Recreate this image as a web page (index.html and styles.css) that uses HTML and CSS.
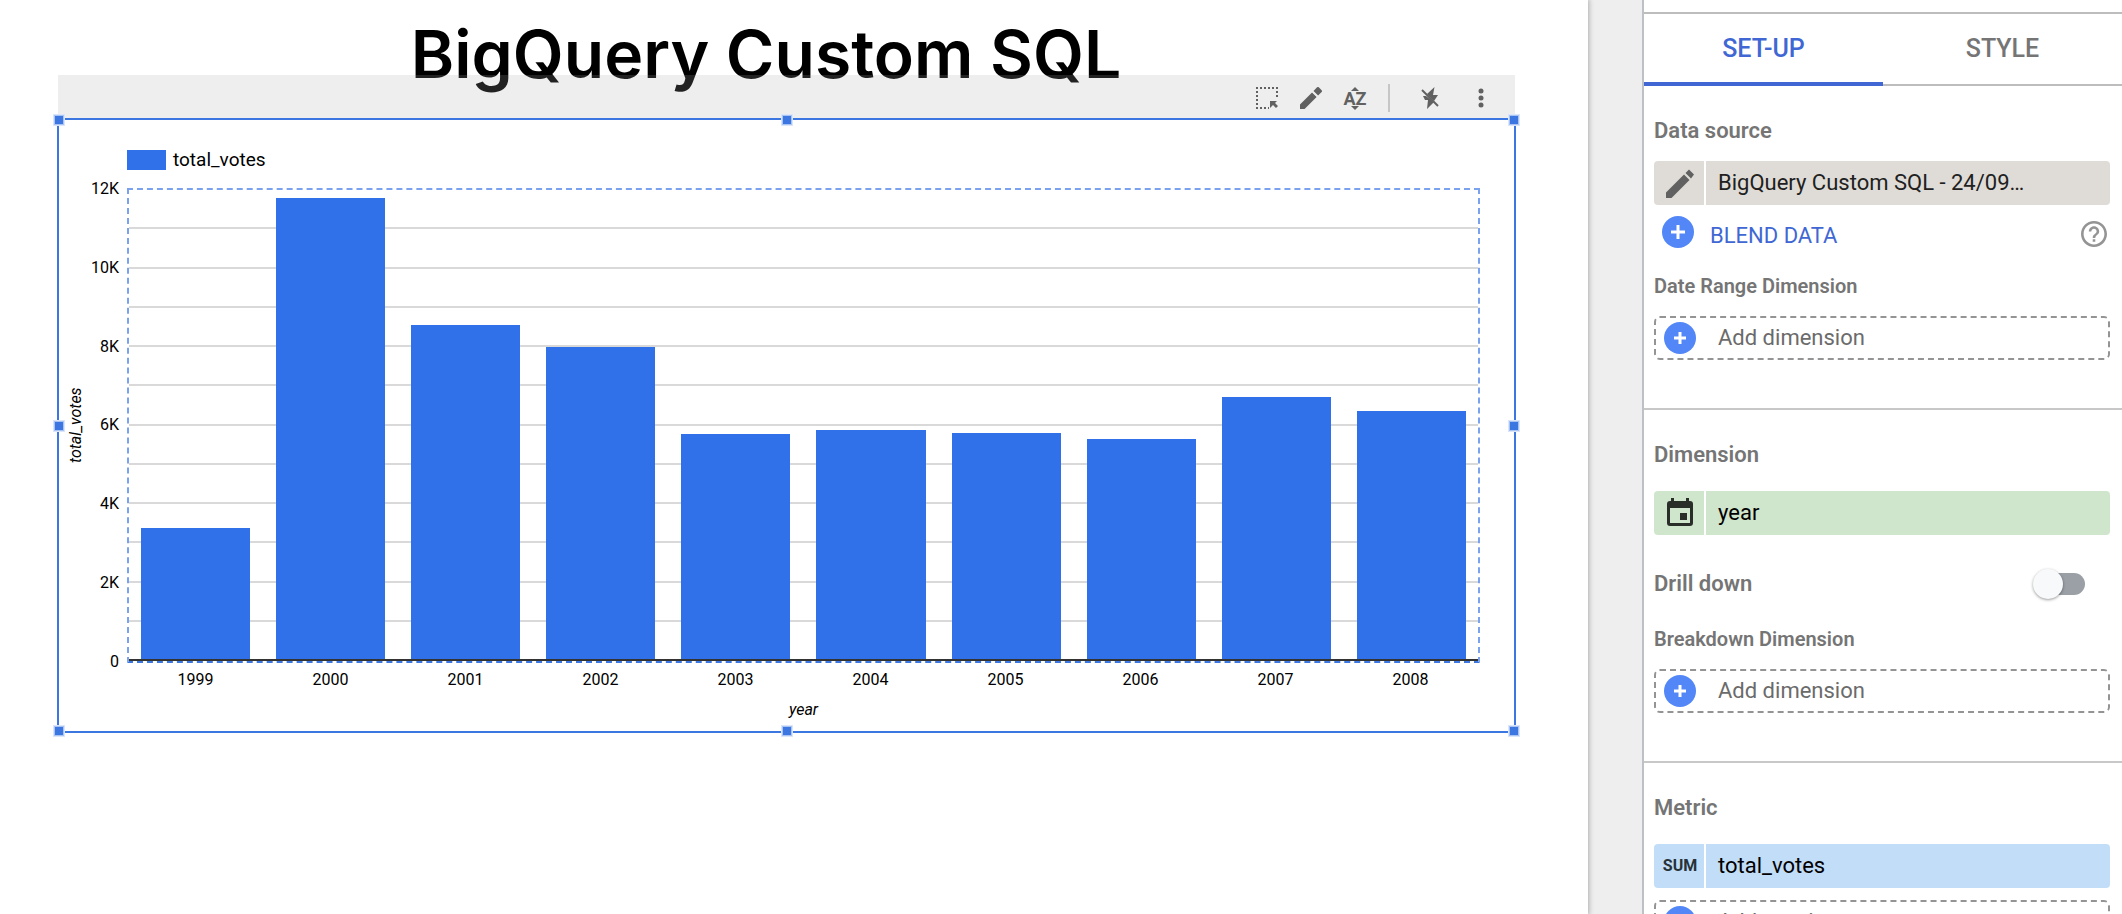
FILE: index.html
```html
<!DOCTYPE html>
<html lang="en">
<head>
<meta charset="utf-8">
<title>BigQuery Custom SQL</title>
<link rel="stylesheet" href="styles.css">
</head>
<body>
<svg class="defs" aria-hidden="true">
  <symbol id="pencil" viewBox="3 3 18 18"><path d="M3 17.25V21h3.75L16.600 11.150l-3.750-3.750L3 17.250zM20.710 7.040a1 1 0 0 0 0-1.410l-2.340-2.340a1 1 0 0 0-1.410 0l-2.900 2.900 3.750 3.750 2.900-2.900z"/><path d="m13.200 6.800 4 4" stroke="#eee" stroke-width=".8"/></symbol>
  <symbol id="pencil-split" viewBox="0 0 28 29"><path d="M0 23.500 18 5.500l5.500 5.500-18 18H0zM19.500 4 23 .5 28 5.500 25 9.500z"/></symbol>
  <symbol id="plus" viewBox="0 0 32 32"><circle cx="16" cy="16" r="16"/><path d="M16 10v12M10 16h12" stroke="#fff" stroke-width="3"/></symbol>
  <symbol id="plus-large" viewBox="0 0 32 32"><circle cx="16" cy="16" r="16"/><path d="M16 9v14M9 16h14" stroke="#fff" stroke-width="3"/></symbol>
</svg>
<div class="app">
  <main class="workspace">
    <div class="page">
      <h1 class="title">BigQuery Custom SQL</h1>
      <section class="component">
        <div class="toolbar">
          <button class="tool" aria-label="Select"><svg width="22" height="22" viewBox="0 0 22 22"><path d="M0 1h22M1 4v18M21 4v8M4 21h9" fill="none" stroke="#616161" stroke-width="2" stroke-dasharray="2 2"/><path d="M14 14h7l-2 2 3 3-2 2-3-3-3 3z"/></svg></button>
          <button class="tool" aria-label="Edit"><svg width="22" height="22"><use href="#pencil"/></svg></button>
          <button class="tool tool-sort" aria-label="Sort"><svg width="8" height="4" viewBox="0 0 8 4"><path d="M0 4 4 0l4 4z"/></svg><span>AZ</span><svg width="8" height="4" viewBox="0 0 8 4"><path d="M0 0h8L4 4z"/></svg></button>
          <span class="rule"></span>
          <button class="tool tool-flash" aria-label="Cross-filtering off"><svg width="18" height="24" viewBox="0 0 18 24"><path d="M13.500 1 12 9h5l-4 6-7-7zM2 10h3l8 6-7 7 1-9H4z"/><path d="M1 4 17 20" stroke="#616161" stroke-width="2"/></svg></button>
          <button class="tool" aria-label="More"><svg width="6" height="20" viewBox="0 0 6 20"><circle cx="3" cy="3" r="2.500"/><circle cx="3" cy="10" r="2.500"/><circle cx="3" cy="17" r="2.500"/></svg></button>
        </div>
        <div class="chart">
          <i class="handle h0 v0"></i><i class="handle h1 v0"></i><i class="handle h2 v0"></i>
          <i class="handle h0 v1"></i><i class="handle h2 v1"></i>
          <i class="handle h0 v2"></i><i class="handle h1 v2"></i><i class="handle h2 v2"></i>
          <div class="legend"><span class="swatch"></span>total_votes</div>
          <div class="graph">
            <div class="y-title">total_votes</div>
            <div class="y-axis"><span>12K</span><span>10K</span><span>8K</span><span>6K</span><span>4K</span><span>2K</span><span>0</span></div>
            <div class="plot">
              <div class="grid"><i></i><i></i><i></i><i></i><i></i><i></i><i></i><i></i><i></i><i></i><i></i><i></i></div>
              <div class="bars">
                <div class="bar" style="height:28%"></div>
                <div class="bar" style="height:98.200%"></div>
                <div class="bar" style="height:71.300%"></div>
                <div class="bar" style="height:66.600%"></div>
                <div class="bar" style="height:47.900%"></div>
                <div class="bar" style="height:48.800%"></div>
                <div class="bar" style="height:48.200%"></div>
                <div class="bar" style="height:47%"></div>
                <div class="bar" style="height:55.800%"></div>
                <div class="bar" style="height:52.900%"></div>
              </div>
            </div>
          </div>
          <div class="x-axis"><span>1999</span><span>2000</span><span>2001</span><span>2002</span><span>2003</span><span>2004</span><span>2005</span><span>2006</span><span>2007</span><span>2008</span></div>
          <div class="x-title">year</div>
        </div>
      </section>
    </div>
  </main>
  <aside class="panel">
    <div class="tabs" role="tablist">
      <button class="tab tab-on" role="tab" aria-selected="true">SET-UP</button>
      <button class="tab" role="tab" aria-selected="false">STYLE</button>
    </div>
    <section class="group group-first">
      <h2 class="heading">Data source</h2>
      <button class="chip chip-source"><span class="chip-icon"><svg width="28" height="29"><use href="#pencil-split"/></svg></span><span class="chip-text">BigQuery Custom SQL - 24/09…</span></button>
      <div class="blend">
        <button class="blend-button"><svg class="add" width="32" height="32"><use href="#plus-large"/></svg><span>BLEND DATA</span></button>
        <button class="help" aria-label="Help"><svg width="26" height="26" viewBox="2 2 20 20"><path d="M11 18h2v-2h-2v2zm1-16C6.480 2 2 6.480 2 12s4.480 10 10 10 10-4.480 10-10S17.520 2 12 2zm0 18c-4.410 0-8-3.590-8-8s3.590-8 8-8 8 3.590 8 8-3.590 8-8 8zm0-14c-2.210 0-4 1.790-4 4h2c0-1.100.9-2 2-2s2 .9 2 2c0 2-3 1.750-3 5h2c0-2.250 3-2.500 3-5 0-2.210-1.790-4-4-4z"/></svg></button>
      </div>
      <h3 class="subheading">Date Range Dimension</h3>
      <button class="slot"><svg class="add" width="32" height="32"><use href="#plus"/></svg><span>Add dimension</span></button>
    </section>
    <section class="group">
      <h2 class="heading">Dimension</h2>
      <button class="chip chip-dimension"><span class="chip-icon"><svg width="26" height="29" viewBox="0 0 26 29"><path fill-rule="evenodd" d="M4 0h3v3h12V0h3v3h1a3 3 0 0 1 3 3v19a3 3 0 0 1-3 3H3a3 3 0 0 1-3-3V6a3 3 0 0 1 3-3h1zM3 10v15h20V10zM13 15h7v7h-7z"/></svg></span><span class="chip-text">year</span></button>
      <label class="drill"><span class="heading-text">Drill down</span><input class="switch" type="checkbox" role="switch"></label>
      <h3 class="subheading">Breakdown Dimension</h3>
      <button class="slot"><svg class="add" width="32" height="32"><use href="#plus"/></svg><span>Add dimension</span></button>
    </section>
    <section class="group">
      <h2 class="heading">Metric</h2>
      <button class="chip chip-metric"><span class="chip-icon">SUM</span><span class="chip-text">total_votes</span></button>
      <button class="slot slot-next"><svg class="add" width="32" height="32"><use href="#plus"/></svg><span>Add metric</span></button>
    </section>
  </aside>
</div>
</body>
</html>
```
FILE: styles.css
```css
* { box-sizing: border-box; }
body {
  margin: 0;
  height: 100vh;
  overflow: hidden;
  font-family: Roboto, "Liberation Sans", sans-serif;
  color: #000;
  background: #eee;
}
button {
  margin: 0;
  padding: 0;
  border: 0;
  background: none;
  font: inherit;
  color: inherit;
  text-align: left;
}
h1, h2, h3 { margin: 0; }
svg { display: block; flex: none; }
.defs { position: absolute; width: 0; height: 0; }
.app { display: flex; height: 100%; }

.workspace { flex: 1; min-width: 0; padding-right: 54px; }
.page {
  height: 100%;
  padding-right: 72px;
  padding-left: 57px;
  background: #fff;
  box-shadow: 0 0 5px 1px rgba(0, 0, 0, .28);
}
.title {
  padding-top: 14px;
  padding-right: 41px;
  font: 600 66px/80px Inter, "Open Sans", sans-serif;
  text-align: center;
  white-space: nowrap;
}
.component { position: relative; margin-top: -19px; }
.toolbar {
  display: flex;
  align-items: center;
  justify-content: flex-end;
  height: 43px;
  margin: 0 1px;
  padding: 3px 30px 0 0;
  background: rgba(170, 170, 170, .2);
}
.tool { display: flex; justify-content: center; width: 44px; fill: #616161; }
.tool:last-child { width: 8px; }
.tool-sort {
  flex-direction: column;
  align-items: center;
  gap: 1px;
  color: #616161;
  font: bold 18px/13px Roboto, sans-serif;
}
.tool-flash { width: 48px; margin-right: 23px; }
.rule { width: 2px; height: 28px; margin: 0 16px 0 11px; background: #c6c6c6; }

.chart {
  position: relative;
  padding: 30px 34px 11px 0;
  border: 2px solid #3b76e1;
}
.handle {
  position: absolute;
  width: 12px;
  height: 12px;
  margin: -6px 0 0 -6px;
  border: 1px solid #dce6fa;
  background: #3b76e1;
  box-shadow: inset 0 0 0 1px #a9c3f3;
}
.h0 { left: 0; }
.h1 { left: 50%; }
.h2 { left: 100%; }
.v0 { top: 0; }
.v1 { top: 50%; }
.v2 { top: 100%; }
.legend {
  display: flex;
  align-items: center;
  gap: 7px;
  height: 20px;
  padding-left: 68px;
  font-size: 19px;
  line-height: 20px;
}
.swatch { width: 39px; height: 20px; background: #3071e9; }
.graph { display: flex; height: 475px; margin-top: 18px; }
.y-title {
  width: 18px;
  margin-left: 8px;
  font-size: 16px;
  font-style: italic;
  line-height: 18px;
  text-align: center;
  writing-mode: vertical-rl;
  transform: rotate(180deg);
}
.y-axis {
  display: flex;
  flex-direction: column;
  justify-content: space-between;
  width: 34px;
  margin: -8px 8px -8px 0;
  font-size: 16px;
  line-height: 18px;
  text-align: right;
}
.plot { position: relative; flex: 1; border: 2px dashed #7ba2ee; border-bottom-color: #3b76e1; }
.grid { display: flex; flex-direction: column; height: 100%; }
.grid i { flex: 1; border-bottom: 2px solid #d9d9d9; }
.grid i:last-child { border-color: #333; }
.bars {
  position: absolute;
  inset: 0 0 2px;
  display: flex;
  align-items: flex-end;
  gap: 26px;
  padding: 0 12px;
}
.bar { flex: 1; background: #3071e9; }
.x-axis {
  display: flex;
  margin-top: 7px;
  padding-right: 2px;
  padding-left: 69px;
  font-size: 16px;
  line-height: 20px;
  text-align: center;
}
.x-axis span { flex: 1; }
.x-title {
  margin-top: 10px;
  padding-left: 68px;
  font-size: 16px;
  font-style: italic;
  line-height: 20px;
  text-align: center;
}

.panel {
  position: relative;
  width: 480px;
  padding-top: 12px;
  border-left: 2px solid #bdc1c6;
  background: #fff;
}
.tabs {
  display: flex;
  height: 74px;
  border-top: 2px solid #bdbdbd;
}
.tab {
  flex: 1;
  padding-bottom: 2px;
  border-bottom: 2px solid #bdbdbd;
  color: #757575;
  font-size: 25px;
  font-weight: 500;
  text-align: center;
}
.tab-on { padding: 0; border-bottom: 4px solid #4067d3; color: #4067d3; }
.group {
  display: flex;
  flex-direction: column;
  padding: 31px 12px 48px 10px;
  border-bottom: 2px solid #c8c8c8;
}
.heading, .heading-text {
  color: #757575;
  font-size: 22px;
  font-weight: 600;
  line-height: 28px;
}
.heading { margin-bottom: 22px; }
.group-first .heading { margin-bottom: 16px; }
.subheading {
  margin-bottom: 16px;
  color: #757575;
  font-size: 20px;
  font-weight: 600;
  line-height: 28px;
}
.chip {
  display: flex;
  gap: 2px;
  height: 44px;
  font-size: 22px;
  line-height: 44px;
}
.chip-icon {
  display: flex;
  align-items: center;
  justify-content: center;
  width: 50px;
  padding-left: 2px;
  border-radius: 4px 0 0 4px;
}
.chip-text { flex: 1; padding-left: 12px; border-radius: 0 4px 4px 0; }
.chip-source span { background: #dfdcd7; color: #212121; fill: #616161; }
.chip-dimension span { background: #cfe6cc; fill: #292e29; }
.chip-dimension .chip-icon { padding-bottom: 2px; }
.chip-metric span { background: #c2ddf8; }
.chip-metric .chip-icon { color: #263238; font-size: 16px; font-weight: 700; }
.blend { display: flex; align-items: center; justify-content: space-between; height: 54px; padding: 0 3px 0 8px; }
.blend-button { display: flex; align-items: center; gap: 16px; color: #4067d3; font-size: 22px; line-height: 24px; }
.blend-button span { padding-top: 8px; }
.blend + .subheading { margin-top: 13px; }
.add { fill: #5387f8; }
.help { padding-top: 4px; fill: #949494; }
.slot {
  display: flex;
  align-items: center;
  gap: 22px;
  height: 44px;
  padding-left: 8px;
  border: 2px dashed #949494;
  border-radius: 6px;
  color: #6b6b6b;
  font-size: 22px;
  line-height: 26px;
}
.slot-next { margin-top: 12px; }
.drill { display: flex; align-items: center; justify-content: space-between; height: 32px; margin: 33px 25px 25px 0; }
.switch {
  appearance: none;
  position: relative;
  width: 46px;
  height: 22px;
  margin: 0;
  border-radius: 11px;
  background: #9aa0a6;
}
.switch::before {
  content: "";
  position: absolute;
  top: -4px;
  left: -6px;
  width: 30px;
  height: 30px;
  border-radius: 50%;
  background: #f8f9fa;
  box-shadow: 0 1px 3px rgba(0, 0, 0, .4);
}
```
